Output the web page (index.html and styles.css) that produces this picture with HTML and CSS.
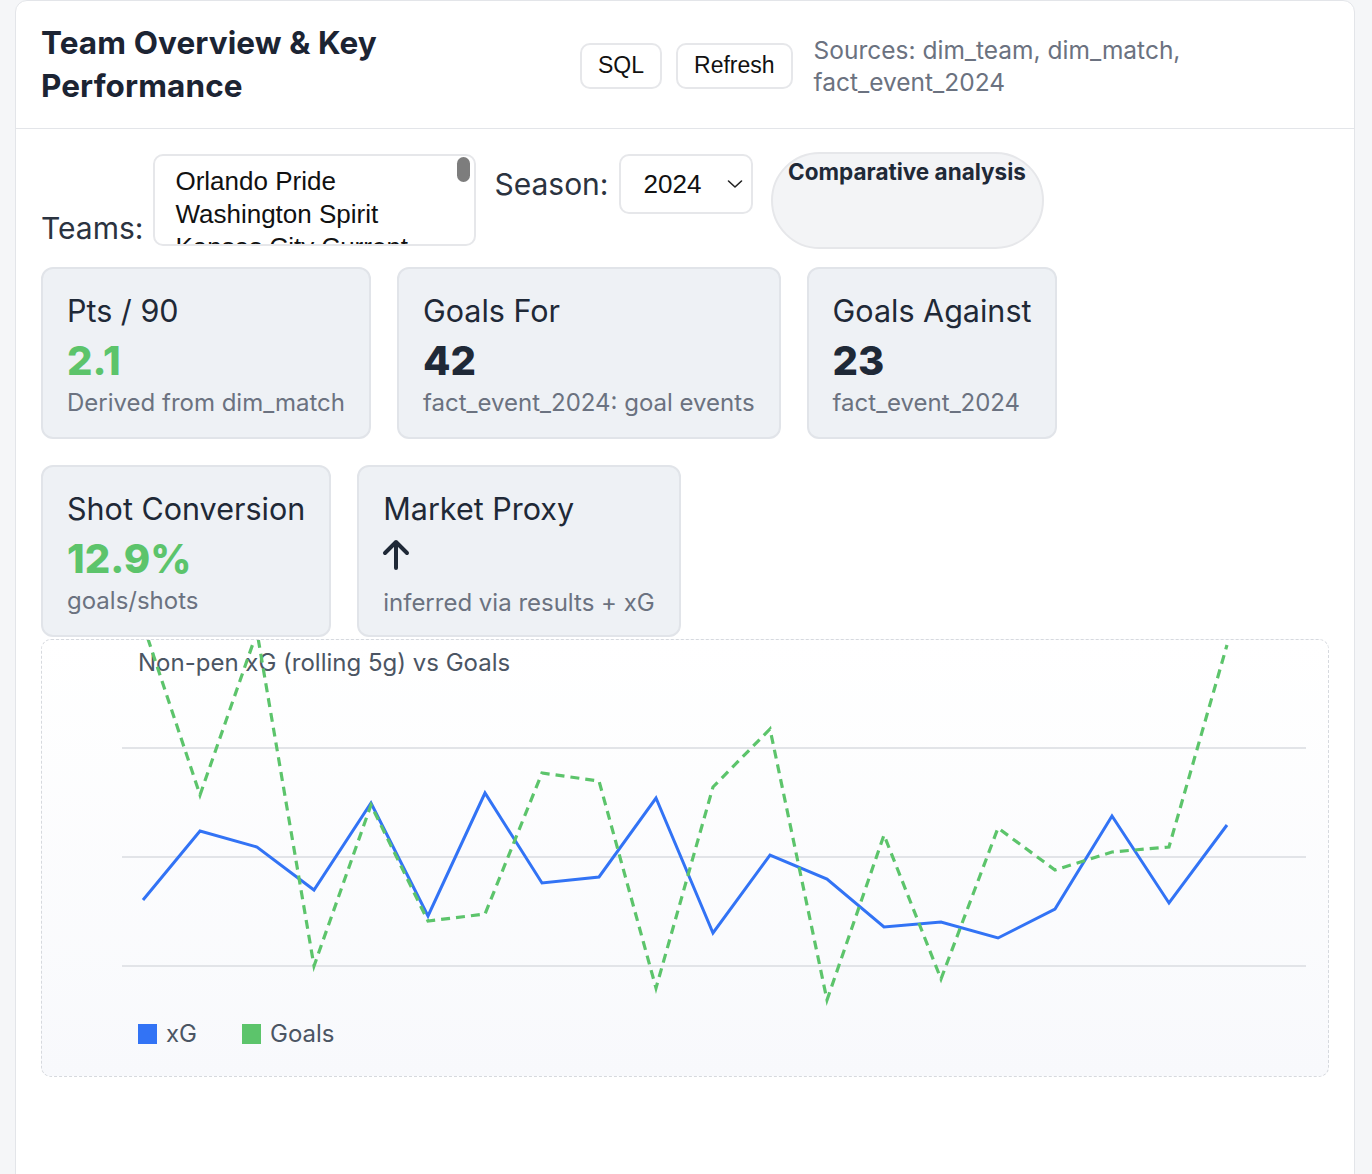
FILE: index.html
```html
<!DOCTYPE html>
<html lang="en">
<head>
<meta charset="utf-8">
<title>Team Overview &amp; Key Performance</title>
<link rel="stylesheet" href="styles.css">
</head>
<body>
<div class="card">
  <header class="card-header">
    <h1 class="title">Team Overview &amp; Key Performance</h1>
    <div class="actions">
      <button class="btn">SQL</button>
      <button class="btn">Refresh</button>
    </div>
    <div class="sources">Sources: dim_team, dim_match, fact_event_2024</div>
  </header>
  <section class="card-body">
    <div class="controls">
      <div class="field field-teams">
        <span class="label">Teams:</span>
        <div class="listbox">
          <div class="option">Orlando Pride</div>
          <div class="option">Washington Spirit</div>
          <div class="option">Kansas City Current</div>
          <span class="thumb"></span>
        </div>
      </div>
      <div class="field field-season">
        <span class="label">Season:</span>
        <div class="select">
          <span>2024</span>
          <svg class="chev" width="16" height="10" viewBox="0 0 16 10"><path d="M1.5 2 L8 8 L14.5 2" fill="none" stroke="#222" stroke-width="1.6" stroke-linecap="round" stroke-linejoin="round"/></svg>
        </div>
      </div>
      <div class="pill">Comparative analysis</div>
    </div>

    <div class="kpi-row">
      <div class="kpi">
        <div class="kpi-label">Pts / 90</div>
        <div class="kpi-value good">2.1</div>
        <div class="kpi-sub">Derived from dim_match</div>
      </div>
      <div class="kpi">
        <div class="kpi-label">Goals For</div>
        <div class="kpi-value">42</div>
        <div class="kpi-sub">fact_event_2024: goal events</div>
      </div>
      <div class="kpi">
        <div class="kpi-label">Goals Against</div>
        <div class="kpi-value">23</div>
        <div class="kpi-sub">fact_event_2024</div>
      </div>
    </div>
    <div class="kpi-row">
      <div class="kpi">
        <div class="kpi-label">Shot Conversion</div>
        <div class="kpi-value good">12.9%</div>
        <div class="kpi-sub">goals/shots</div>
      </div>
      <div class="kpi">
        <div class="kpi-label">Market Proxy</div>
        <div class="kpi-value"><svg class="arrow" width="30" height="34" viewBox="0 0 30 34"><path d="M15 30 V4 M4 15 L15 4 L26 15" fill="none" stroke="#1f2937" stroke-width="4" stroke-linecap="round" stroke-linejoin="round"/></svg></div>
        <div class="kpi-sub">inferred via results + xG</div>
      </div>
    </div>

    <div class="chart">
      <svg class="chart-svg" width="1286" height="436" viewBox="0 0 1286 436">
        <g transform="translate(-42,-640)">
          <g class="grid">
            <line x1="122" y1="748" x2="1306" y2="748"/>
            <line x1="122" y1="857" x2="1306" y2="857"/>
            <line x1="122" y1="966" x2="1306" y2="966"/>
          </g>
          <text class="chart-title" x="138" y="671">Non-pen xG (rolling 5g) vs Goals</text>
          <polyline class="line-xg" points="143,900 200,831 257,847 314,890 371,803 428,916 485,793 542,883 599,877 656,798 713,933 770,855 827,879 884,927 941,922 998,938 1055,909 1112,816 1169,903 1227,825"/>
          <polyline class="line-goals" points="143,624 200,795 257,632 314,966 371,805 428,921 485,914 542,773 599,781 656,988 713,787 770,729 827,1000 884,835 941,979 998,828 1055,870 1112,852 1169,847 1227,645"/>
          <rect x="138" y="1024" width="19" height="20" fill="#3273f5"/>
          <text class="legend" x="166" y="1042">xG</text>
          <rect x="242" y="1024" width="19" height="20" fill="#5cc46b"/>
          <text class="legend" x="270" y="1042">Goals</text>
        </g>
      </svg>
    </div>
  </section>
</div>
</body>
</html>
```

FILE: styles.css
```css
* { box-sizing: border-box; }
html, body { margin: 0; padding: 0; }
body {
  background: #f5f6f8;
  font-family: Inter, "Noto Sans", "Liberation Sans", sans-serif;
  color: #1f2937;
  padding: 0 0 0 15px;
  height: 1174px;
  overflow: hidden;
}
.card {
  width: 1340px;
  min-height: 1300px;
  background: #fff;
  border: 1px solid #e3e5e9;
  border-radius: 12px;
}
.card-header {
  display: flex;
  align-items: center;
  padding: 22px 25px 20px 25px;
  border-bottom: 1px solid #e3e5e9;
  height: 128px;
}
.title {
  margin: -3px 0 0 0;
  width: 380px;
  flex: 0 0 380px;
  font-size: 31.5px;
  line-height: 43px;
  font-weight: 700;
  color: #1c2433;
  letter-spacing: 0.1px;
}
.actions {
  display: flex;
  gap: 14px;
  margin-left: 159px;
}
.btn {
  font-family: "Liberation Sans", Arial, sans-serif;
  font-size: 23px;
  color: #111;
  background: #fff;
  border: 2px solid #e6e7ea;
  border-radius: 10px;
  height: 46px;
  padding: 0 16px;
}
.sources {
  margin-left: 21px;
  width: 400px;
  font-size: 24.5px;
  line-height: 32px;
  color: #6b7280;
}
.card-body {
  padding: 25px 25px 0 25px;
}
.controls {
  display: flex;
  align-items: flex-start;
  gap: 18px;
}
.field {
  display: flex;
  gap: 10px;
}
.field-teams { align-items: flex-end; }
.field-season { align-items: center; }
.label {
  font-size: 30px;
  line-height: 36px;
  color: #2b3340;
}
.listbox {
  position: relative;
  width: 323px;
  height: 92px;
  border: 2px solid #e6e7ea;
  border-radius: 10px;
  overflow: hidden;
  padding: 9px 0 0 20px;
  font-family: "Liberation Sans", Arial, sans-serif;
  font-size: 26px;
  color: #111;
}
.option { line-height: 33px; height: 33px; white-space: nowrap; }
.thumb {
  position: absolute;
  right: 4px;
  top: 1px;
  width: 13px;
  height: 25px;
  background: #7d7d7d;
  border-radius: 7px;
}
.select {
  width: 134px;
  height: 60px;
  border: 2px solid #e6e7ea;
  border-radius: 10px;
  display: flex;
  align-items: center;
  justify-content: space-between;
  padding: 0 8px 0 23px;
  font-family: "Liberation Sans", Arial, sans-serif;
  font-size: 26px;
  color: #111;
}
.chev { display: block; }
.pill {
  margin-top: -2px;
  width: 273px;
  height: 97px;
  border: 2px solid #e6e7ea;
  border-radius: 49px;
  background: #f3f4f6;
  text-align: center;
  font-size: 22.5px;
  font-weight: 700;
  padding-top: 3px;
  line-height: 30px;
  color: #1f2937;
  white-space: nowrap;
}
.kpi-row {
  display: flex;
  gap: 26px;
  margin-top: 18px;
}
.kpi-row + .kpi-row { margin-top: 26px; }
.kpi {
  background: #eef1f5;
  border: 2px solid #e1e4e9;
  border-radius: 12px;
  padding: 24px 24px 20px 24px;
  height: 172px;
}
.kpi-label {
  font-size: 30.5px;
  line-height: 36px;
  color: #1f2937;
  white-space: nowrap;
}
.kpi-value {
  margin-top: 9px;
  height: 46px;
  font-size: 40px;
  line-height: 46px;
  font-weight: 800;
  color: #1f2937;
}
.kpi-value.good { color: #5cc46b; }
.arrow { display: block; margin-top: 11px; margin-left: -2px; }
.kpi-sub {
  margin-top: 5px;
  font-size: 24px;
  line-height: 28px;
  color: #6b7280;
  white-space: nowrap;
}
.chart {
  margin-top: 2px;
  height: 438px;
  border: 1px dashed #d6d9de;
  border-radius: 10px;
  overflow: hidden;
  background: linear-gradient(#ffffff, #f8f9fc);
}
.chart-svg { display: block; }
.grid line { stroke: #e2e4e8; stroke-width: 2; }
.chart-title { font-family: Inter, "Noto Sans", sans-serif; font-size: 24px; fill: #4b5563; }
.legend { font-family: Inter, "Noto Sans", sans-serif; font-size: 24px; fill: #4b5563; }
.line-xg { fill: none; stroke: #3273f5; stroke-width: 3; stroke-linejoin: miter; }
.line-goals { fill: none; stroke: #5cc46b; stroke-width: 3.2; stroke-dasharray: 9 6; }
```
